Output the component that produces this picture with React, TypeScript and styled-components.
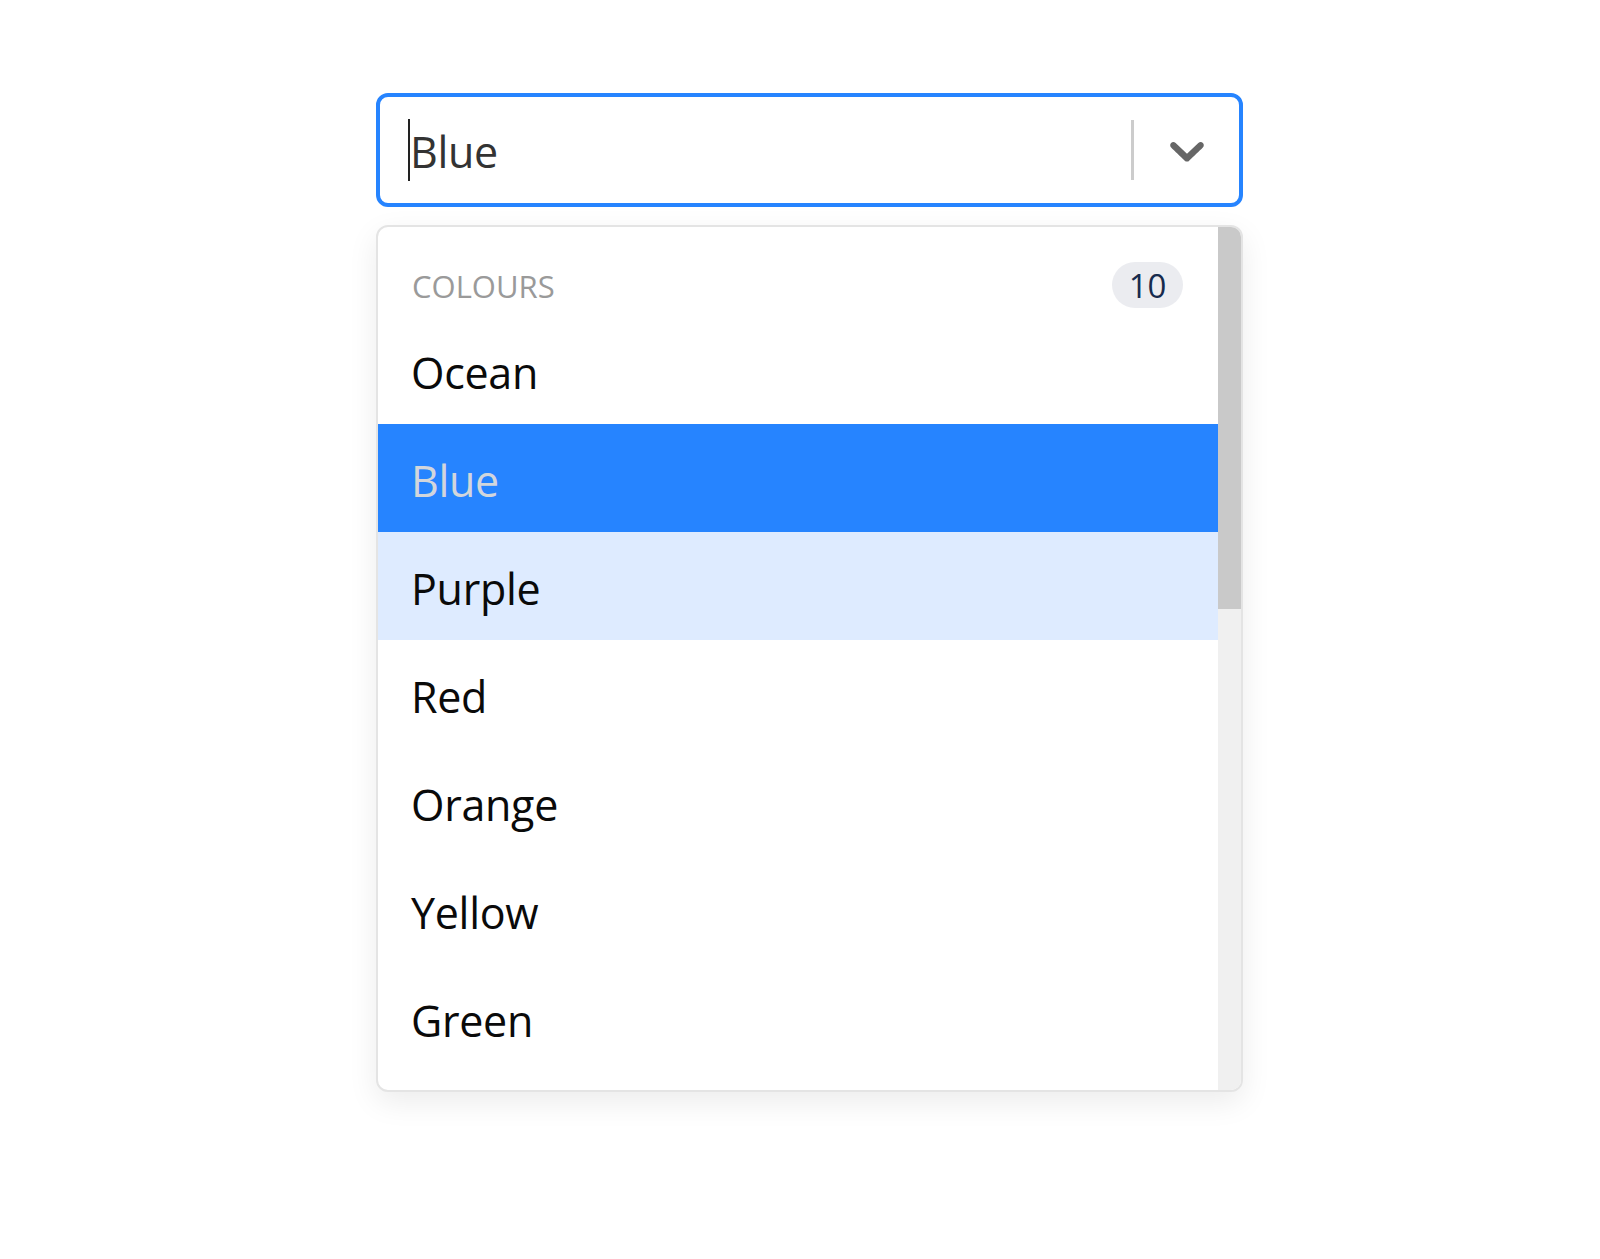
import React from "react";
import styled, { createGlobalStyle } from "styled-components";

const Global = createGlobalStyle`
  html, body { margin: 0; padding: 0; background: #ffffff; }
  body { font-family: "Open Sans", "Noto Sans", sans-serif; }
`;

const Page = styled.div`
  padding: 93px 0 0 376px;
  height: 1259px;
  box-sizing: border-box;
`;

const Wrapper = styled.div`
  width: 867px;
  display: flex;
  flex-direction: column;
  gap: 18px;
`;

const Control = styled.div`
  height: 114px;
  box-sizing: border-box;
  border: 4px solid #2684ff;
  border-radius: 12px;
  display: flex;
  align-items: center;
  background: #fff;
`;

const ValueArea = styled.div`
  flex: 1;
  display: flex;
  align-items: center;
  padding-left: 28px;
  height: 100%;
`;

const Caret = styled.span`
  width: 2px;
  height: 62px;
  background: #222;
`;

const ValueText = styled.span`
  font-size: 43px;
  color: #333;
  line-height: 1;
  margin-top: 3px;
  letter-spacing: -0.3px;
`;

const Separator = styled.span`
  align-self: stretch;
  width: 3px;
  margin: 23px 0;
  background: #cccccc;
`;

const Indicator = styled.div`
  width: 105px;
  display: flex;
  align-items: center;
  justify-content: center;
  color: #666666;
`;

const Menu = styled.div`
  height: 867px;
  box-sizing: border-box;
  border: 2px solid #e4e4e4;
  border-radius: 12px;
  box-shadow: 0 10px 30px rgba(0, 0, 0, 0.08);
  overflow: hidden;
  display: flex;
  background: #fff;
`;

const List = styled.div`
  flex: 1;
  padding-top: 35px;
  overflow: hidden;
`;

const Heading = styled.div`
  display: flex;
  align-items: center;
  justify-content: space-between;
  padding: 0 35px 0 34px;
  height: 46px;
  margin-bottom: 8px;
`;

const HeadingLabel = styled.span`
  font-size: 31px;
  color: #9a9a9a;
  text-transform: uppercase;
  margin-top: 2px;
`;

const Badge = styled.span`
  display: inline-flex;
  align-items: center;
  justify-content: center;
  min-width: 71px;
  height: 46px;
  border-radius: 23px;
  background: #ebecf0;
  color: #172b4d;
  font-size: 33px;
  line-height: 1;
`;

const Option = styled.div<{ $selected?: boolean; $focused?: boolean }>`
  height: 108px;
  box-sizing: border-box;
  display: flex;
  align-items: center;
  padding: 5px 0 0 33px;
  font-size: 43px;
  letter-spacing: -0.3px;
  color: ${(p) => (p.$selected ? "#d2d6dc" : "#0a0a0a")};
  background: ${(p) => (p.$selected ? "#2684ff" : p.$focused ? "#deebff" : "transparent")};
`;

const Track = styled.div`
  width: 23px;
  background: #f0f0f0;
  display: flex;
  flex-direction: column;
`;

const Thumb = styled.div`
  height: 382px;
  background: #c9c9c9;
`;

const options = ["Ocean", "Blue", "Purple", "Red", "Orange", "Yellow", "Green"];

const Chevron = () => (
  <svg width="58" height="58" viewBox="0 0 20 20" fill="currentColor" aria-hidden="true">
    <path d="M4.516 7.548c0.436-0.446 1.043-0.481 1.576 0l3.908 3.747 3.908-3.747c0.533-0.481 1.141-0.446 1.574 0 0.436 0.445 0.408 1.197 0 1.615-0.406 0.418-4.695 4.502-4.695 4.502-0.217 0.223-0.502 0.335-0.787 0.335s-0.57-0.112-0.789-0.335c0 0-4.287-4.084-4.695-4.502s-0.436-1.17 0-1.615z" />
  </svg>
);

export default function App() {
  return (
    <>
      <Global />
      <Page>
        <Wrapper>
          <Control>
            <ValueArea>
              <Caret />
              <ValueText>Blue</ValueText>
            </ValueArea>
            <Separator />
            <Indicator>
              <Chevron />
            </Indicator>
          </Control>
          <Menu>
            <List>
              <Heading>
                <HeadingLabel>Colours</HeadingLabel>
                <Badge>10</Badge>
              </Heading>
              {options.map((o) => (
                <Option key={o} $selected={o === "Blue"} $focused={o === "Purple"}>
                  {o}
                </Option>
              ))}
            </List>
            <Track>
              <Thumb />
            </Track>
          </Menu>
        </Wrapper>
      </Page>
    </>
  );
}
